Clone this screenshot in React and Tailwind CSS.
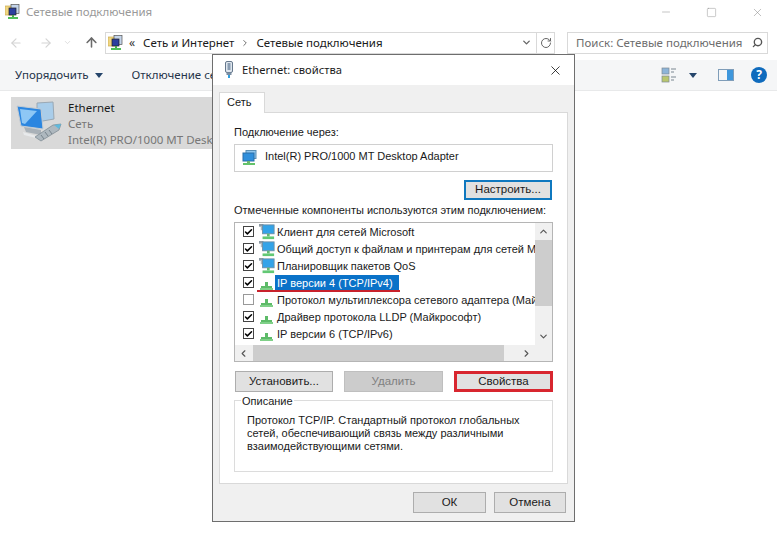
import { ArrowLeft, ArrowRight, ArrowUp, ChevronDown, ChevronLeft, ChevronRight, ChevronUp, RotateCw, Search, X, Minus, Square, Check } from 'lucide-react';

const font = 'font-["Noto_Sans",sans-serif]';
const dlgFont = 'font-["Liberation_Sans",sans-serif]';

function NetIcon({ className }) {
  return (
    <svg viewBox="0 0 16 16" className={className}>
      <rect x="4" y="0.5" width="10" height="8" fill="#8fc6ee" stroke="#5a8fb5" />
      <rect x="1" y="3" width="11" height="8" fill="#2f8fdc" stroke="#2a6fa8" />
      <rect x="5" y="11" width="3" height="2" fill="#6fb56f" />
      <rect x="1" y="13" width="12" height="2" fill="#63c26a" />
    </svg>
  );
}

function FolderNetIcon({ className }) {
  return (
    <svg viewBox="0 0 16 16" className={className}>
      <rect x="0" y="2" width="8" height="9" fill="#f0d682" stroke="#c9a94f" strokeWidth="0.7" />
      <rect x="6" y="0.5" width="8" height="9" fill="#c4d4ea" stroke="#555" strokeWidth="0.7" />
      <rect x="4" y="4" width="7" height="7" fill="#2c3f9e" stroke="#222" strokeWidth="0.7" />
      <rect x="7" y="11" width="2" height="2" fill="#4aa84f" />
      <rect x="3" y="13" width="10" height="2" fill="#4fbf58" />
    </svg>
  );
}

function ProtoIcon({ className }) {
  return (
    <svg viewBox="0 0 16 16" className={className}>
      <path d="M6 7h3v4h4v2H2v-2h4z" fill="#5dbb68" />
      <rect x="1" y="13" width="13" height="2" fill="#7fd088" />
    </svg>
  );
}

function ClientIcon({ className }) {
  return (
    <svg viewBox="0 0 18 18" className={className}>
      <rect x="0" y="0" width="5" height="3" fill="#8c9aa5" />
      <rect x="2" y="3" width="3" height="4" fill="#a9bac5" />
      <rect x="4" y="1" width="13" height="10" fill="#33a3e8" stroke="#6c8ea6" />
      <rect x="9" y="11" width="3" height="3" fill="#62b872" />
      <rect x="4" y="14" width="13" height="3" fill="#62c874" />
    </svg>
  );
}

function PlugIcon({ className }) {
  return (
    <svg viewBox="0 0 12 18" className={className}>
      <rect x="2.5" y="0.5" width="7" height="11" rx="1.5" fill="#dfe6ee" stroke="#66788c" />
      <rect x="4.5" y="2" width="3" height="7" fill="#8a9db2" />
      <rect x="3.5" y="11.5" width="5" height="2.5" fill="#7d8fa3" />
      <rect x="5" y="14" width="2" height="3" fill="#2f9fe0" />
    </svg>
  );
}

function BigNetIcon({ className }) {
  return (
    <svg viewBox="0 0 48 46" className={className}>
      <path d="M22 4l16-1 1 17-17 3z" fill="#a9cdea" stroke="#9aa8b4" />
      <path d="M2 7l24 3 2 20L6 27z" fill="#2c86e0" stroke="#c4ccd3" />
      <path d="M5 10l17 2-12 13-3-1z" fill="#8ec7f5" />
      <path d="M9 28l17 3v5L11 33z" fill="#a9b1b8" />
      <path d="M8 33l17 5v2L9 36z" fill="#e8eaec" />
      <path d="M20 38l18-12 8-1-2 6-18 11z" fill="#aeb8bf" stroke="#78858e" strokeWidth="0.7" />
      <path d="M26 36l3 4M30 33l3 4M34 31l3 4" stroke="#77838c" strokeWidth="1" />
      <path d="M39 26l7-1-2 5z" fill="#5fb9dc" />
    </svg>
  );
}

function ViewIcon({ className }) {
  return (
    <svg viewBox="0 0 16 16" className={className}>
      <rect x="1" y="1" width="7" height="6" fill="#8db4d8" stroke="#7f8b95" strokeWidth="0.7" />
      <rect x="1" y="9" width="7" height="6" fill="#b9c66e" stroke="#7f8b95" strokeWidth="0.7" />
      <path d="M10 2h5M10 5h3M10 10h5M10 13h3" stroke="#7b8791" strokeWidth="1" />
    </svg>
  );
}

function Caret() {
  return <span className="inline-block w-0 h-0 border-x-[4px] border-x-transparent border-t-[5px] border-t-[#25456b]" />;
}

function Btn({ children, className = '' }) {
  return (
    <div className={`flex items-center justify-center bg-[#e1e1e1] border border-[#adadad] text-[11.5px] text-[#1a1a1a] ${className}`}>
      {children}
    </div>
  );
}

const rows = [
  { label: 'Клиент для сетей Microsoft', on: true, Icon: ClientIcon },
  { label: 'Общий доступ к файлам и принтерам для сетей Mi', on: true, Icon: ClientIcon },
  { label: 'Планировщик пакетов QoS', on: true, Icon: ClientIcon },
  { label: 'IP версии 4 (TCP/IPv4)', on: true, Icon: ProtoIcon, selected: true },
  { label: 'Протокол мультиплексора сетевого адаптера (Май', on: false, Icon: ProtoIcon },
  { label: 'Драйвер протокола LLDP (Майкрософт)', on: true, Icon: ProtoIcon },
  { label: 'IP версии 6 (TCP/IPv6)', on: true, Icon: ProtoIcon },
];

function Row({ label, on, Icon, selected }) {
  return (
    <div className="relative flex items-center h-[17px] pl-[8px] whitespace-nowrap">
      <div className={`w-[11px] h-[11px] shrink-0 border bg-white flex items-center justify-center ${on ? 'border-[#444]' : 'border-[#999]'}`}>
        {on && <Check size={10} strokeWidth={4} className="text-black" />}
      </div>
      <Icon className="w-[16px] h-[16px] shrink-0 ml-[5px]" />
      <span className={`px-[2px] text-[11px] leading-[16px] ${selected ? 'bg-[#0a72c8] text-white pr-[6px]' : 'text-[#1a1a1a]'}`}>{label}</span>
      {selected && <div className="absolute left-[22px] top-[16px] w-[143px] h-[2px] bg-[#c8222c]" />}
    </div>
  );
}

export default function App() {
  return (
    <div className={`relative w-[777px] h-[539px] bg-white overflow-hidden ${font}`}>
      {/* explorer window */}
      <div className="flex items-center h-[24px] pl-[5px]">
        <FolderNetIcon className="w-[16px] h-[16px]" />
        <span className="ml-[5px] text-[11.5px] text-[#9a9a9a]">Сетевые подключения</span>
        <div className="ml-auto flex items-center gap-[34px] pr-[13px] text-[#8a8a8a]">
          <Minus size={12} strokeWidth={1} />
          <Square size={11} strokeWidth={1} />
          <X size={13} strokeWidth={1} />
        </div>
      </div>
      <div className="flex items-center h-[36px] pt-[1px] pl-[9px] pr-[9px]">
        <ArrowLeft size={14} className="text-[#d4d4d4]" />
        <ArrowRight size={14} className="ml-[16px] text-[#d4d4d4]" />
        <ChevronDown size={9} className="ml-[10px] text-[#d4d4d4]" />
        <ArrowUp size={15} strokeWidth={2.5} className="ml-[12px] text-[#6b6b6b]" />
        <div className="ml-[6px] flex items-center w-[450px] h-[22px] border border-[#d9d9d9] pl-[2px]">
          <FolderNetIcon className="w-[16px] h-[16px]" />
          <span className="ml-[5px] text-[12px] text-[#333]">«</span>
          <span className="ml-[8px] text-[11.5px] text-[#1a1a1a]">Сеть и Интернет</span>
          <ChevronRight size={10} className="ml-[6px] text-[#555]" />
          <span className="ml-[6px] text-[11.5px] text-[#1a1a1a]">Сетевые подключения</span>
          <div className="ml-auto flex items-center h-full">
            <ChevronDown size={11} strokeWidth={3} className="mr-[4px] text-[#666]" />
            <div className="flex items-center justify-center w-[18px] h-full border-l border-[#d9d9d9]">
              <RotateCw size={12} className="text-[#666]" />
            </div>
          </div>
        </div>
        <div className="ml-auto flex items-center w-[201px] h-[22px] border border-[#d9d9d9] pl-[8px] pr-[4px]">
          <span className="text-[11.5px] text-[#6d6d6d] whitespace-nowrap">Поиск: Сетевые подключения</span>
          <Search size={11} strokeWidth={3} className="ml-auto text-[#555] -scale-x-100" />
        </div>
      </div>
      <div className="flex items-center h-[31px] pl-[15px] pr-[10px] bg-[#f5f6f7] border-b border-[#e8e9ea]">
        <span className="text-[11.5px] text-[#25344a]">Упорядочить</span>
        <span className="ml-[6px] flex"><Caret /></span>
        <span className="ml-[29px] w-[81px] overflow-hidden text-[11.5px] text-[#25344a] whitespace-nowrap">Отключение сетевого устройства</span>
        <ViewIcon className="ml-auto w-[16px] h-[16px]" />
        <span className="ml-[12px] flex"><Caret /></span>
        <div className="ml-[21px] flex w-[16px] h-[12px] border border-[#7f9db9]">
          <div className="w-[8px]" />
          <div className="flex-1 bg-[#3f97dc]" />
        </div>
        <div className="ml-[17px] flex items-center justify-center w-[16px] h-[16px] rounded-full bg-[#0f6bbd] text-[12px] leading-none font-bold text-white">?</div>
      </div>
      <div className="ml-[11px] mt-[6px] flex w-[205px] h-[52px] bg-[#d9d9d9] overflow-hidden">
        <BigNetIcon className="ml-[4px] mt-[2px] w-[48px] h-[46px] shrink-0" />
        <div className="ml-[5px] flex flex-col text-[11.5px] leading-[16px] whitespace-nowrap pt-[3px]">
          <span className="text-[#1a1a1a]">Ethernet</span>
          <span className="text-[#777]">Сеть</span>
          <span className="w-[146px] overflow-hidden text-[#777]">Intel(R) PRO/1000 MT Desktop Adapter</span>
        </div>
      </div>

      {/* properties dialog */}
      <div className={`absolute left-[212px] top-[54px] w-[363px] h-[468px] flex flex-col bg-[#f0f0f0] border border-[#6e6e6e] ${dlgFont}`}>
        <div className="flex items-center h-[30px] shrink-0 pl-[10px] pr-[11px] bg-white">
          <PlugIcon className="w-[12px] h-[18px]" />
          <span className={`ml-[7px] text-[11.2px] text-[#1a1a1a] ${font}`}>Ethernet: свойства</span>
          <X size={15} strokeWidth={1.2} className="ml-auto text-black" />
        </div>
        <div className="relative z-10 ml-[6px] mt-[7px] w-[46px] h-[21px] -mb-[1px] pl-[7px] bg-white border border-b-0 border-[#d9d9d9] text-[11px] leading-[18px] text-[#1a1a1a]">Сеть</div>
        <div className="flex flex-col mx-[6px] h-[372px] bg-white border border-[#d9d9d9] px-[14px]">
          <div className="mt-[11px] text-[11px] leading-[16px] text-[#1a1a1a]">Подключение через:</div>
          <div className="mt-[4px] flex items-center w-[319px] h-[28px] pl-[7px] pb-[4px] border border-[#d0d0d0]">
            <NetIcon className="w-[16px] h-[16px] mt-[4px]" />
            <span className="ml-[7px] text-[11px] text-[#1a1a1a]">Intel(R) PRO/1000 MT Desktop Adapter</span>
          </div>
          <Btn className="ml-[230px] mt-[8px] w-[88px] h-[20px] !border-2 !border-[#0f78bf]">Настроить...</Btn>
          <div className="mt-[2px] text-[11px] leading-[16px] text-[#1a1a1a] whitespace-nowrap">Отмеченные компоненты используются этим подключением:</div>
          <div className="mt-[4px] flex w-[319px] h-[140px] border border-[#b5b5b5]">
            <div className="flex flex-col flex-1 min-w-0">
              <div className="flex-1 overflow-hidden">
                {rows.map((r) => <Row key={r.label} {...r} />)}
              </div>
              <div className="flex items-center h-[16px] bg-[#f0f0f0]">
                <ChevronLeft size={11} strokeWidth={2.5} className="ml-[3px] mr-[4px] text-[#555]" />
                <div className="w-[251px] h-full bg-[#cdcdcd]" />
                <ChevronRight size={11} strokeWidth={2.5} className="ml-auto mr-[3px] text-[#555]" />
              </div>
            </div>
            <div className="flex flex-col items-center w-[17px] h-full bg-[#f0f0f0]">
              <ChevronUp size={11} strokeWidth={2.5} className="my-[3px] text-[#555]" />
              <div className="w-full h-[66px] bg-[#cdcdcd]" />
              <ChevronDown size={11} strokeWidth={2.5} className="mt-auto mb-[19px] text-[#555]" />
            </div>
          </div>
          <div className="mt-[9px] flex justify-between pl-[1px]">
            <Btn className="w-[98px] h-[21px]">Установить...</Btn>
            <Btn className="w-[99px] h-[21px] !bg-[#cccccc] !border-[#bfbfbf] !text-[#808080]">Удалить</Btn>
            <Btn className="w-[99px] h-[21px] !border-[3px] !border-[#d8262f]">Свойства</Btn>
          </div>
          <div className="relative mt-[8px] w-[319px] h-[72px] border border-[#dcdcdc] pl-[12px] pr-[8px] pt-[13px]">
            <span className="absolute left-[6px] -top-[8px] px-[1px] bg-white text-[11px] leading-[16px] text-[#1a1a1a]">Описание</span>
            <p className="text-[11px] leading-[13px] text-[#1a1a1a]">Протокол TCP/IP. Стандартный протокол глобальных сетей, обеспечивающий связь между различными взаимодействующими сетями.</p>
          </div>
        </div>
        <div className="flex justify-end gap-[8px] mt-[8px] pr-[8px]">
          <Btn className="w-[73px] h-[21px]">ОК</Btn>
          <Btn className="w-[72px] h-[21px]">Отмена</Btn>
        </div>
      </div>
    </div>
  );
}
